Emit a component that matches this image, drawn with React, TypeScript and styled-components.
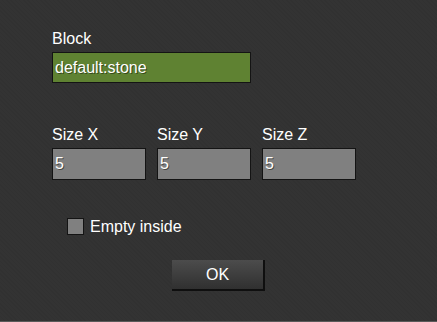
import React from 'react';
import styled, {createGlobalStyle} from "styled-components";

const GlobalStyle = createGlobalStyle`
  html, body {
    margin: 0;
    padding: 0;
    background-color: #333333;
  }
  body {
    font-family: "Liberation Sans", Arial, sans-serif;
  }
`

type FieldPropsType = {
    label: string
    value: string
    width: number
    green?: boolean
}

const Field = (props: FieldPropsType) => {
    return (
        <StyledField>
            <Label>{props.label}</Label>
            <Input $width={props.width} $green={props.green} defaultValue={props.value}/>
        </StyledField>
    );
};

export default function App() {
    return (
        <>
            <GlobalStyle/>
            <Page>
                <Form>
                    <Field label="Block" value="default:stone" width={199} green/>
                    <SizeRow>
                        <Field label="Size X" value="5" width={94}/>
                        <Field label="Size Y" value="5" width={94}/>
                        <Field label="Size Z" value="5" width={94}/>
                    </SizeRow>
                    <CheckRow>
                        <Box/>
                        <CheckText>Empty inside</CheckText>
                    </CheckRow>
                </Form>
                <ButtonRow>
                    <Button>OK</Button>
                </ButtonRow>
            </Page>
        </>
    );
}

const Page = styled.div`
  width: 437px;
  height: 321px;
  border-bottom: 1px solid #5a5a5a;
  background-color: #333333;
  background-image: repeating-linear-gradient(45deg, rgba(0, 0, 0, 0.04) 0 1px, transparent 1px 3px);
  color: #ffffff;
  overflow: hidden;
`
const Form = styled.div`
  display: flex;
  flex-direction: column;
  padding: 30px 0 0 52px;
`
const StyledField = styled.div`
  display: flex;
  flex-direction: column;
`
const Label = styled.div`
  font-size: 16px;
  line-height: 17px;
  margin-bottom: 5px;
  color: #ffffff;
`
const Input = styled.input<{ $width: number, $green?: boolean }>`
  width: ${props => props.$width}px;
  height: ${props => props.$green ? 31 : 32}px;
  box-sizing: border-box;
  margin: 0;
  padding: 0 0 0 2px;
  border: 1px solid #141414;
  background-color: ${props => props.$green ? '#5f8232' : '#808080'};
  color: #ffffff;
  font-family: "Liberation Sans", Arial, sans-serif;
  font-size: 16px;
  text-shadow: 1px 1px 0 rgba(0, 0, 0, 0.45);
  outline: none;
`
const SizeRow = styled.div`
  display: flex;
  gap: 11px;
  margin-top: 43px;
`
const CheckRow = styled.div`
  display: flex;
  align-items: center;
  gap: 6px;
  margin: 38px 0 0 15px;
`
const Box = styled.div`
  width: 17px;
  height: 17px;
  box-sizing: border-box;
  border: 1px solid #141414;
  background-color: #808080;
`
const CheckText = styled.span`
  font-size: 16px;
  line-height: 17px;
`
const ButtonRow = styled.div`
  display: flex;
  justify-content: center;
  margin-top: 25px;
`
const Button = styled.button`
  width: 93px;
  height: 31px;
  box-sizing: border-box;
  padding: 0;
  border: none;
  border-right: 2px solid #0f0f0f;
  border-bottom: 2px solid #0f0f0f;
  background: linear-gradient(to bottom, #4c4c4c, #303030);
  color: #ffffff;
  font-family: "Liberation Sans", Arial, sans-serif;
  font-size: 16px;
`
